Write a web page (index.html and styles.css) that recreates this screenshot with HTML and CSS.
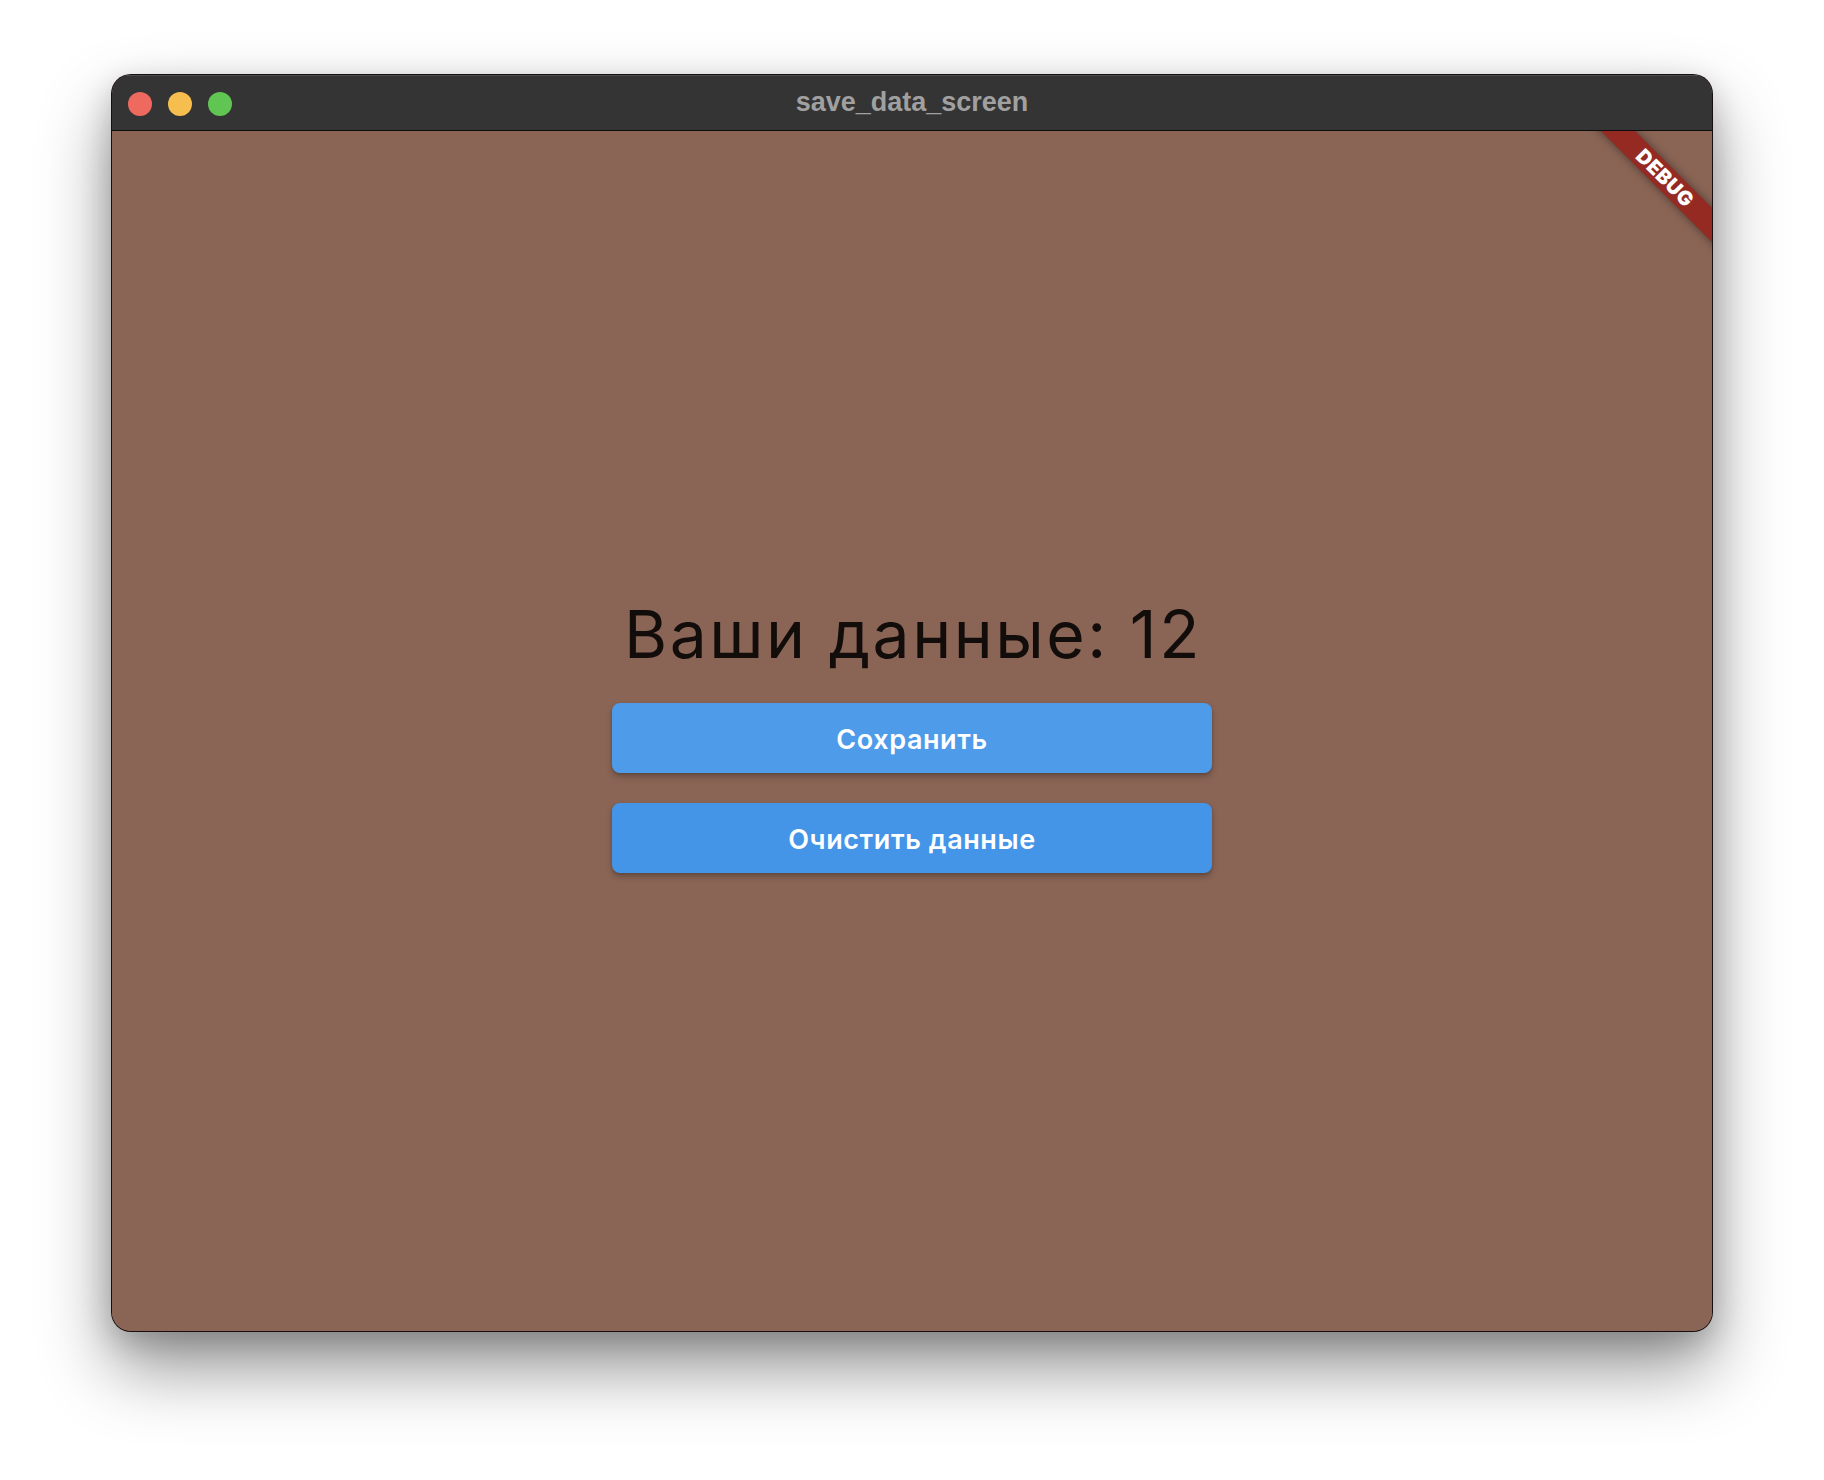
FILE: index.html
```html
<!DOCTYPE html>
<html lang="ru">
<head>
<meta charset="utf-8">
<title>save_data_screen</title>
<link rel="stylesheet" href="styles.css">
</head>
<body>
<div class="window">
  <div class="titlebar">
    <div class="lights">
      <span class="light red"></span>
      <span class="light yellow"></span>
      <span class="light green"></span>
    </div>
    <div class="title">save_data_screen</div>
  </div>
  <div class="content">
    <div class="banner"><span>DEBUG</span></div>
    <div class="group">
      <h1 class="heading">Ваши данные: 12</h1>
      <button class="btn btn-save">Сохранить</button>
      <button class="btn btn-clear">Очистить данные</button>
    </div>
  </div>
</div>
</body>
</html>
```

FILE: styles.css
```css
html, body {
  margin: 0;
  padding: 0;
  background: #ffffff;
}
body {
  width: 1824px;
  height: 1480px;
  overflow: hidden;
  font-family: Inter, Roboto, sans-serif;
}
.window {
  margin: 74px 0 0 111px;
  width: 1600px;
  border: 1px solid rgba(0, 0, 0, 0.85);
  border-radius: 20px;
  overflow: hidden;
  box-shadow: 0 36px 70px rgba(0, 0, 0, 0.42), 0 10px 30px rgba(0, 0, 0, 0.18);
  background: #8a6556;
}
.titlebar {
  position: relative;
  height: 56px;
  box-sizing: border-box;
  background: #343434;
  border-bottom: 1px solid #0c0c0c;
  display: flex;
  align-items: center;
  justify-content: center;
  box-shadow: inset 0 1px 0 rgba(255, 255, 255, 0.12);
}
.lights {
  position: absolute;
  left: 16px;
  top: 17px;
  display: flex;
  gap: 16px;
}
.light {
  width: 24px;
  height: 24px;
  border-radius: 50%;
  display: block;
}
.red { background: #ee6a5f; }
.yellow { background: #f5be4f; }
.green { background: #61c554; }
.title {
  font-family: "Liberation Sans", Arial, sans-serif;
  font-weight: 700;
  font-size: 27px;
  color: #a0a0a0;
  line-height: 30px;
  padding-bottom: 1px;
}
.content {
  position: relative;
  height: 1200px;
  background: #8a6556;
  display: flex;
  align-items: center;
  justify-content: center;
  overflow: hidden;
}
.group {
  width: 600px;
  display: flex;
  flex-direction: column;
  align-items: center;
  padding-top: 4px;
}
.heading {
  margin: 0 0 29px 0;
  padding-left: 2px;
  font-family: Inter, Roboto, sans-serif;
  font-weight: 400;
  font-size: 66px;
  line-height: 80px;
  letter-spacing: 2.5px;
  color: rgba(0, 0, 0, 0.87);
  white-space: nowrap;
}
.btn {
  width: 600px;
  height: 70px;
  border: none;
  border-radius: 8px;
  color: #ffffff;
  font-family: Inter, Roboto, sans-serif;
  font-weight: 600;
  font-size: 27px;
  letter-spacing: 0.6px;
  padding: 4px 0 0 0;
  box-shadow: 0 4px 6px rgba(0, 0, 0, 0.22), 0 1px 3px rgba(0, 0, 0, 0.16);
}
.btn-save {
  background: #4e9bea;
  margin-bottom: 30px;
}
.btn-clear {
  background: #4494e8;
}
.banner {
  position: absolute;
  top: 35px;
  right: -53px;
  width: 200px;
  height: 24px;
  background: rgba(150, 36, 30, 0.9);
  transform: rotate(45deg);
  display: flex;
  align-items: center;
  justify-content: center;
  box-shadow: 0 0 10px rgba(0, 0, 0, 0.45);
}
.banner span {
  font-family: Inter, "Liberation Sans", sans-serif;
  font-weight: 900;
  font-size: 20px;
  line-height: 20px;
  color: #ffffff;
  letter-spacing: 0.5px;
}
```
